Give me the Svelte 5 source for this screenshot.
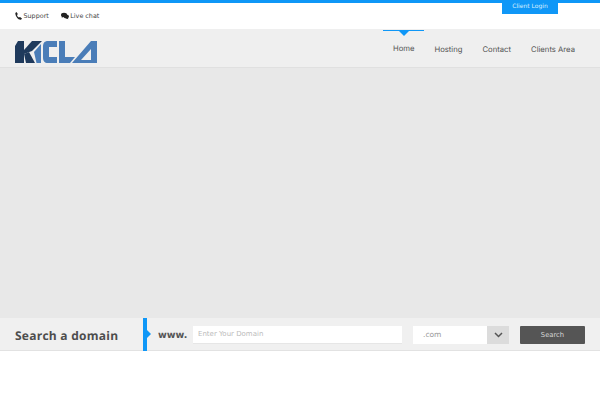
<script>
  const links = ['Home', 'Hosting', 'Contact', 'Clients Area'];
</script>

<div class="page">
  <header class="top">
    <div class="contact">
      <span class="item">
        <svg width="7" height="8" viewBox="0 0 7 8"><path d="M1.5 0 L2.8 2 L2 3.2 C2.4 4.3 3 5 3.9 5.6 L5 4.9 L7 6.4 L6 7.7 C3 8 0.4 4.5 0.3 1 Z" fill="#222"/></svg>
        Support
      </span>
      <span class="item">
        <svg width="8" height="8" viewBox="0 0 9 8"><ellipse cx="3.4" cy="2.9" rx="3.4" ry="2.5" fill="#222"/><path d="M1.2 4 L0.8 6 L3.2 4.8 Z" fill="#222"/><ellipse cx="6" cy="4.6" rx="3" ry="2.2" fill="#222"/><path d="M7.2 5.5 L8.4 7.6 L5.4 6.4 Z" fill="#222"/></svg>
        Live chat
      </span>
    </div>
    <a class="login" href="#login">Client Login</a>
  </header>

  <nav class="nav">
    <svg class="logo" width="82" height="23" viewBox="0 0 82 23" aria-label="KICLA">
      <path d="M3 1H9V23H0V6Z" fill="#1f3a5c"/>
      <path d="M9 10L17 1H27L17 11L9 14Z" fill="#1f3a5c"/>
      <path d="M9 14L14 12L20 23H11Z" fill="#1f3a5c"/>
      <path d="M19 12L26 4V23H21.5Z" fill="#4a7db8"/>
      <path d="M42 1H33C29.5 1 28 3 28 7V17C28 21 29.5 23 33 23H42V17H34V7H42Z" fill="#4a7db8"/>
      <path d="M44 1H50V17H60L55 23H44Z" fill="#4a7db8"/>
      <path d="M57 23L76 1H82V23ZM66 20H76V9Z" fill="#4a7db8" fill-rule="evenodd"/>
    </svg>
    <ul class="links">
      {#each links as link, i}
        <li class:active={i === 0}><a href="#{link}">{link}</a></li>
      {/each}
    </ul>
  </nav>

  <main class="hero"></main>

  <section class="search">
    <h2>Search a domain</h2>
    <div class="marker"></div>
    <span class="www">www.</span>
    <input class="domain" placeholder="Enter Your Domain" />
    <div class="select">
      <span class="tld">.com</span>
      <span class="arrow">
        <svg width="9" height="6" viewBox="0 0 9 6"><path d="M1 1L4.5 4.5L8 1" fill="none" stroke="#555" stroke-width="1.5"/></svg>
      </span>
    </div>
    <button class="go">Search</button>
  </section>
</div>

<style>
  :global(body) { margin: 0; background: #fff; }
  .page { width: 600px; height: 400px; overflow: hidden; font-family: "DejaVu Sans", sans-serif; color: #555; text-rendering: geometricPrecision; }
  .top { height: 26px; border-top: 3px solid #0f97f7; background: #fff; display: flex; justify-content: space-between; padding: 0 42px 0 15px; }
  .contact { display: flex; gap: 12px; padding-top: 9px; font-size: 6.4px; line-height: 8px; height: 8px; color: #444; }
  .item { display: flex; align-items: center; gap: 1.5px; }
  .login { width: 56px; height: 11px; background: #0f97f7; color: #d8eefe; font-size: 6px; line-height: 8px; text-align: center; text-decoration: none; }
  .nav { height: 38px; background: #efefef; border-bottom: 1px solid #e0e0e0; display: flex; justify-content: space-between; padding: 0 15px; }
  .logo { margin-top: 11px; }
  .links { list-style: none; margin: 0; padding: 0; display: flex; }
  .links li { position: relative; padding: 15px 10px 0; font-family: Inter, sans-serif; font-size: 7.7px; line-height: 11px; }
  .links li.active { padding-top: 14px; }
  .links li a { color: #555; text-decoration: none; }
  .links li.active::before { content: ""; position: absolute; top: 1px; left: 0; right: 0; height: 1px; background: #0f97f7; }
  .links li.active::after { content: ""; position: absolute; top: 2px; left: 16px; border: 5px solid transparent; border-top-color: #0f97f7; border-bottom: 0; }
  .hero { height: 250px; background: #e8e8e8; }
  .search { box-sizing: border-box; height: 33px; padding: 2px 0 0 15px; background: #f0f0f0; border-bottom: 1px solid #e2e2e2; display: flex; align-items: center; }
  h2 { margin: 0; width: 128px; font-family: "Open Sans", sans-serif; font-size: 12px; letter-spacing: 0.25px; font-weight: 700; color: #4d4d4d; }
  .marker { position: relative; width: 4px; height: 33px; margin-top: -2px; align-self: flex-start; background: #0f97f7; }
  .marker::after { content: ""; position: absolute; left: 4px; top: 12px; border: 4px solid transparent; border-left-color: #0f97f7; border-right: 0; }
  .www { margin-left: 11px; width: 35px; font-size: 9.5px; font-weight: 700; color: #555; }
  .domain { width: 209px; height: 18px; padding: 0 5px 2px; box-sizing: border-box; border: 0; border-bottom: 1px solid #e6e6e6; background: #fff; font: 7px "DejaVu Sans", sans-serif; }
  .domain::placeholder { color: #bbb; opacity: 1; }
  .select { display: flex; width: 96px; height: 18px; margin-left: 11px; background: #fff; }
  .tld { flex: 1; padding-left: 10px; font-size: 7.5px; line-height: 17px; color: #999; }
  .arrow { width: 22px; background: #dcdcdc; display: flex; align-items: center; justify-content: center; }
  .go { width: 65px; height: 18px; margin-left: 11px; background: #555; color: #d5d5d5; border: 0; border-radius: 1px; padding: 0 0 1px; font: 6.8px "DejaVu Sans", sans-serif; }
</style>
